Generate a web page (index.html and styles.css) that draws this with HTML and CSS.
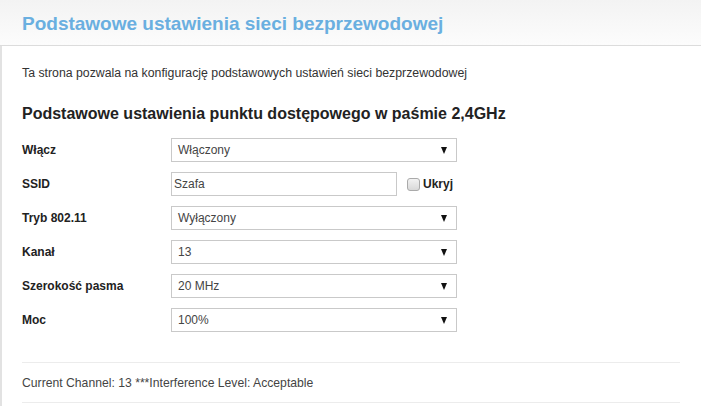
FILE: index.html
```html
<!DOCTYPE html>
<html lang="pl">
<head>
<meta charset="utf-8">
<link rel="stylesheet" href="styles.css">
</head>
<body>
<div class="page">
  <div class="header">
    <h1 class="title">Podstawowe ustawienia sieci bezprzewodowej</h1>
  </div>
  <div class="content">
    <p class="intro">Ta strona pozwala na konfigurację podstawowych ustawień sieci bezprzewodowej</p>
    <h2 class="section">Podstawowe ustawienia punktu dostępowego w paśmie 2,4GHz</h2>
    <div class="form">
      <div class="row">
        <div class="label">Włącz</div>
        <div class="select"><span>Włączony</span><span class="arrow"></span></div>
      </div>
      <div class="row">
        <div class="label">SSID</div>
        <div class="input">Szafa</div>
        <div class="check"><span class="box"></span><span class="check-label">Ukryj</span></div>
      </div>
      <div class="row">
        <div class="label">Tryb 802.11</div>
        <div class="select"><span>Wyłączony</span><span class="arrow"></span></div>
      </div>
      <div class="row">
        <div class="label">Kanał</div>
        <div class="select"><span>13</span><span class="arrow"></span></div>
      </div>
      <div class="row">
        <div class="label">Szerokość pasma</div>
        <div class="select"><span>20 MHz</span><span class="arrow"></span></div>
      </div>
      <div class="row">
        <div class="label">Moc</div>
        <div class="select"><span>100%</span><span class="arrow"></span></div>
      </div>
    </div>
    <div class="status">Current Channel: 13 ***Interference Level: Acceptable</div>
  </div>
</div>
</body>
</html>
```

FILE: styles.css
```css
html, body {
  margin: 0;
  padding: 0;
  background: #fff;
}
body {
  font-family: "Liberation Sans", Arial, sans-serif;
  color: #333;
}
.page {
  width: 701px;
  height: 406px;
  overflow: hidden;
}
.header {
  height: 46px;
  background: linear-gradient(#f3f3f3, #fcfcfc);
  border-bottom: 1px solid #dcdcdc;
  box-sizing: border-box;
  padding-left: 22px;
  display: flex;
  align-items: center;
}
.title {
  margin: 0;
  font-size: 19px;
  font-weight: bold;
  color: #6aafe0;
  padding-top: 2px;
}
.content {
  border-left: 2px solid #e2e2e2;
  padding: 0 21px 0 20px;
  height: 360px;
}
.intro {
  margin: 0;
  padding-top: 20px;
  font-size: 12.3px;
  line-height: 14px;
  color: #333;
}
.section {
  margin: 24px 0 0 0;
  font-size: 16px;
  line-height: 19px;
  font-weight: bold;
  color: #222;
}
.form {
  margin-top: 15px;
  display: flex;
  flex-direction: column;
  gap: 10px;
}
.row {
  display: flex;
  align-items: center;
  height: 24px;
}
.label {
  width: 149px;
  font-size: 12px;
  font-weight: bold;
  color: #222;
}
.select {
  width: 286px;
  height: 24px;
  box-sizing: border-box;
  border: 1px solid #c9c9c9;
  display: flex;
  align-items: center;
  justify-content: space-between;
  padding: 0 9px 0 6px;
  font-size: 12px;
  color: #444;
}
.arrow {
  width: 0;
  height: 0;
  border-left: 3.5px solid transparent;
  border-right: 3.5px solid transparent;
  border-top: 7px solid #111;
}
.input {
  width: 226px;
  height: 24px;
  box-sizing: border-box;
  border: 1px solid #c9c9c9;
  display: flex;
  align-items: center;
  padding-left: 2px;
  font-size: 12px;
  color: #444;
}
.check {
  display: flex;
  align-items: center;
  margin-left: 10px;
}
.box {
  width: 11px;
  height: 11px;
  border: 1px solid #aaa;
  border-radius: 3px;
  background: linear-gradient(#f2f2f2, #d8d8d8);
}
.check-label {
  margin-left: 3px;
  font-size: 12px;
  font-weight: bold;
  color: #222;
}
.status {
  margin-top: 30px;
  width: 658px;
  border-top: 1px solid #ececec;
  border-bottom: 1px solid #ececec;
  height: 41px;
  box-sizing: border-box;
  display: flex;
  align-items: center;
  font-size: 12.2px;
  color: #444;
}
```
